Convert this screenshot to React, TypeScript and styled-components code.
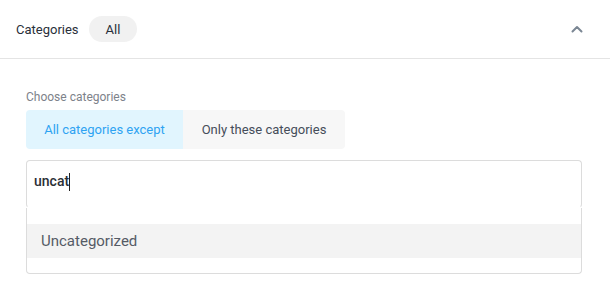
import React from 'react';
import styled, { createGlobalStyle } from 'styled-components';

const GlobalStyle = createGlobalStyle`
  html, body {
    margin: 0;
    padding: 0;
    background: #ffffff;
    font-family: Roboto, "Liberation Sans", Arial, sans-serif;
  }
`;

const Panel = styled.section`
  width: 610px;
  background: #ffffff;
`;

const Header = styled.header`
  height: 58px;
  display: flex;
  align-items: center;
  padding: 0 26px 0 16px;
  border-bottom: 1px solid #e4e4e4;
  box-sizing: content-box;
`;

const Title = styled.span`
  font-size: 13px;
  font-weight: 400;
  color: #2a303a;
`;

const Pill = styled.span`
  margin-left: 10px;
  height: 26px;
  padding: 0 17px;
  border-radius: 13px;
  background: #f1f1f1;
  display: inline-flex;
  align-items: center;
  font-size: 13px;
  font-weight: 400;
  color: #2a303a;
`;

const Toggle = styled.button`
  margin-left: auto;
  border: 0;
  background: none;
  padding: 0;
  width: 14px;
  height: 14px;
  display: flex;
  align-items: center;
  justify-content: center;
  cursor: pointer;
`;

const Body = styled.div`
  padding: 30px 28px 0 26px;
`;

const Label = styled.div`
  font-size: 12px;
  line-height: 16px;
  color: #7d828a;
  margin-bottom: 5px;
`;

const Tabs = styled.div`
  display: flex;
  margin-bottom: 11px;
`;

const Tab = styled.button<{ $active?: boolean; $first?: boolean; $width: number }>`
  width: ${p => p.$width}px;
  height: 39px;
  border: 0;
  padding: 0;
  font-family: inherit;
  font-size: 13px;
  font-weight: 400;
  cursor: pointer;
  background: ${p => (p.$active ? '#e1f5fe' : '#f7f7f7')};
  color: ${p => (p.$active ? '#2ea3f2' : '#454d5a')};
  border-radius: ${p => (p.$first ? '4px 0 0 4px' : '0 4px 4px 0')};
`;

const Combo = styled.div`
  width: 556px;
`;

const Field = styled.div`
  height: 48px;
  box-sizing: border-box;
  border: 1px solid #dcdcdc;
  border-bottom-color: transparent;
  border-radius: 4px;
  padding: 10px 7px 0;
  display: flex;
  align-items: flex-start;
`;

const Typed = styled.span`
  font-size: 14px;
  line-height: 20px;
  font-weight: 500;
  color: #2b2f36;
`;

const Caret = styled.span`
  display: inline-block;
  width: 1px;
  height: 18px;
  margin-top: 2px;
  background: #222;
`;

const Menu = styled.ul`
  list-style: none;
  margin: 0;
  padding: 16px 0 15px;
  border: 1px solid #dcdcdc;
  border-top: 0;
  border-radius: 0 0 4px 4px;
`;

const Option = styled.li<{ $highlighted?: boolean }>`
  height: 34px;
  line-height: 34px;
  padding: 0 14px;
  font-size: 15px;
  font-weight: 400;
  color: #555b66;
  background: ${p => (p.$highlighted ? '#f3f3f3' : 'transparent')};
`;

const ChevronUp = () => (
  <svg width="12" height="8" viewBox="0 0 12 8" fill="none">
    <path d="M1.5 6.5 L6 2 L10.5 6.5" stroke="#7b8794" strokeWidth="2" strokeLinecap="round" strokeLinejoin="round" />
  </svg>
);

const App: React.FC = () => {
  return (
    <>
      <GlobalStyle />
      <Panel>
        <Header>
          <Title>Categories</Title>
          <Pill>All</Pill>
          <Toggle aria-label="Collapse">
            <ChevronUp />
          </Toggle>
        </Header>
        <Body>
          <Label>Choose categories</Label>
          <Tabs>
            <Tab $active $first $width={157}>All categories except</Tab>
            <Tab $width={162}>Only these categories</Tab>
          </Tabs>
          <Combo>
            <Field>
              <Typed>uncat</Typed>
              <Caret />
            </Field>
            <Menu>
              <Option $highlighted>Uncategorized</Option>
            </Menu>
          </Combo>
        </Body>
      </Panel>
    </>
  );
};

export default App;
